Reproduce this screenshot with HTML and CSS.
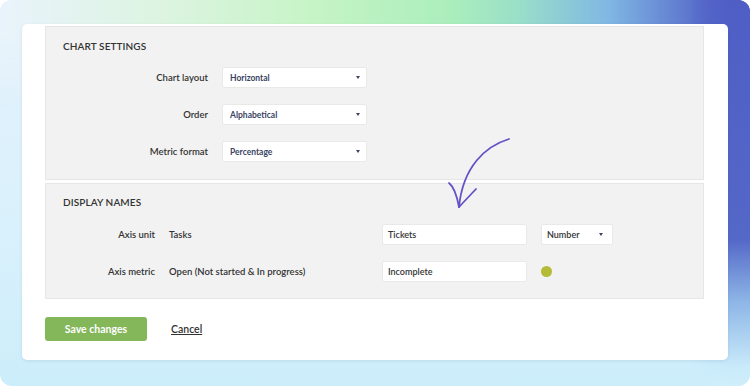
FILE: index.html
```html
<!DOCTYPE html>
<html>
<head>
<meta charset="utf-8">
<link rel="stylesheet" href="styles.css">
</head>
<body>
<div class="page">
  <div class="card">
    <section class="panel panel-chart">
      <h2 class="panel-title">CHART SETTINGS</h2>
      <div class="settings-grid">
        <div class="label">Chart layout</div>
        <div class="select"><span>Horizontal</span><i class="caret"></i></div>
        <div class="label">Order</div>
        <div class="select"><span>Alphabetical</span><i class="caret"></i></div>
        <div class="label">Metric format</div>
        <div class="select"><span>Percentage</span><i class="caret"></i></div>
      </div>
    </section>
    <section class="panel panel-names">
      <h2 class="panel-title">DISPLAY NAMES</h2>
      <div class="names-grid">
        <div class="label">Axis unit</div>
        <div class="value">Tasks</div>
        <div class="input">Tickets</div>
        <div class="select select-small"><span>Number</span><i class="caret"></i></div>
        <div class="label">Axis metric</div>
        <div class="value">Open (Not started &amp; In progress)</div>
        <div class="input">Incomplete</div>
        <div class="dot-cell"><span class="dot"></span></div>
      </div>
    </section>
    <div class="footer">
      <button class="btn-save">Save changes</button>
      <a class="cancel" href="#">Cancel</a>
    </div>
  </div>
  <svg class="arrow" viewBox="0 0 750 386" width="750" height="386">
    <path d="M509 139 C 486 146, 463 166, 459 207" fill="none" stroke="#6652c6" stroke-width="1.8" stroke-linecap="round"/>
    <path d="M449 183 C 454 187, 457 196, 459 207" fill="none" stroke="#6652c6" stroke-width="1.8" stroke-linecap="round"/>
    <path d="M476 189 L 459 207" fill="none" stroke="#6652c6" stroke-width="1.8" stroke-linecap="round"/>
  </svg>
</div>
</body>
</html>
```
FILE: styles.css
```css
* { box-sizing: border-box; }
html, body { margin: 0; padding: 0; background: #ffffff; }
body { font-family: Lato, "Open Sans", "Liberation Sans", sans-serif; color: #333; }

.page {
  position: relative;
  width: 750px;
  height: 386px;
  border-radius: 12px;
  overflow: hidden;
  padding: 24px 22px 26px 22px;
  background: linear-gradient(to bottom, #e4f1fc 0%, #d9f1fc 60%, #ccedfa 100%);
}
.page::before {
  content: "";
  position: absolute;
  inset: 0;
  background: linear-gradient(90deg, #e9f3fc 0%, #dcf4e0 22%, #c6f4c6 42%, #abeebc 60%, #9adfc8 69%, #80b8e3 81%, #5a70cc 93%, #4f5ec5 100%);
  -webkit-mask-image: linear-gradient(to bottom, #000 0, #000 30px, transparent 110px);
  mask-image: linear-gradient(to bottom, #000 0, #000 30px, transparent 110px);
}
.page::after {
  content: "";
  position: absolute;
  inset: 0;
  background: linear-gradient(to bottom, #4f5ec5 0%, #5468c8 62%, #8db5e6 78%, #c8eafa 95%, #d0eefb 100%);
  -webkit-mask-image: linear-gradient(to left, #000 0, #000 22px, transparent 60px);
  mask-image: linear-gradient(to left, #000 0, #000 22px, transparent 60px);
}

.card {
  position: relative;
  z-index: 1;
  width: 706px;
  height: 336px;
  background: #fff;
  border-radius: 5px;
  padding: 2px 24px 0 23px;
  box-shadow: 0 1px 3px rgba(60, 90, 120, 0.12);
}

.panel {
  background: #f2f2f2;
  border: 1px solid #e6e6e6;
}
.panel-chart {
  height: 154px;
  padding: 12px 0 0 0;
}
.panel-names {
  margin-top: 3px;
  height: 116px;
  padding: 11px 0 0 0;
}
.panel-title {
  margin: 0 0 0 17px;
  font-size: 10px;
  line-height: 14px;
  font-weight: 600;
  color: #333;
  letter-spacing: 0.1px;
}

.label {
  font-size: 9.5px;
  font-weight: 600;
  color: #333;
  text-align: right;
}
.value {
  font-size: 9.5px;
  font-weight: 600;
  color: #333;
}

.settings-grid {
  margin-top: 14px;
  display: grid;
  grid-template-columns: 162px 145px;
  column-gap: 14px;
  row-gap: 16px;
  align-items: center;
}

.select, .input {
  height: 21px;
  background: #fff;
  border: 1px solid #e9e9e9;
  border-radius: 2px;
  display: flex;
  align-items: center;
  padding: 0 7px;
  font-size: 8.5px;
  font-weight: 700;
  color: #3a4462;
}
.select span { flex: 1; }
.caret {
  width: 0;
  height: 0;
  border-left: 2.5px solid transparent;
  border-right: 2.5px solid transparent;
  border-top: 3px solid #3a4462;
  margin-right: -1px;
}
.select-small { width: 72px; padding: 0 10px 0 5px; color: #333; font-weight: 600; font-size: 9px; }
.input { color: #333; font-weight: 600; font-size: 9px; padding: 0 5px; }

.names-grid {
  margin-top: 15px;
  display: grid;
  grid-template-columns: 109px 199px 145px auto;
  column-gap: 14px;
  row-gap: 16px;
  align-items: center;
}
.dot-cell { display: flex; align-items: center; }
.dot {
  display: block;
  width: 11px;
  height: 11px;
  border-radius: 50%;
  background: #b3bb37;
}

.footer {
  margin-top: 18px;
  display: flex;
  align-items: center;
  gap: 24px;
}
.btn-save {
  width: 102px;
  height: 24px;
  border: none;
  border-radius: 3px;
  background: #84b65a;
  color: #fff;
  font-family: inherit;
  font-size: 10.5px;
  font-weight: 700;
  padding: 0;
}
.cancel {
  font-size: 10.5px;
  font-weight: 600;
  color: #333;
  text-decoration: underline;
}

.arrow {
  position: absolute;
  left: 0;
  top: 0;
  z-index: 2;
  pointer-events: none;
}
```
